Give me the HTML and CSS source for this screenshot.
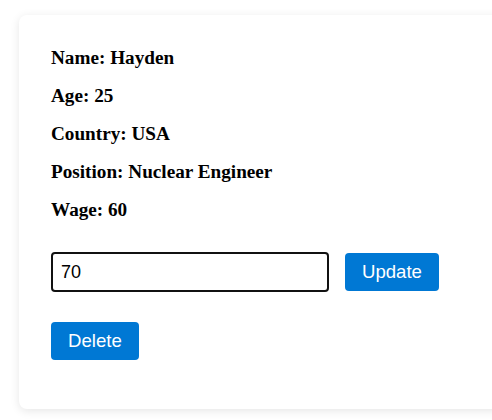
FILE: index.html
```html
<!DOCTYPE html>
<html>
<head>
<meta charset="utf-8">
<link rel="stylesheet" href="styles.css">
</head>
<body>
<div class="card">
  <p class="field">Name: Hayden</p>
  <p class="field">Age: 25</p>
  <p class="field">Country: USA</p>
  <p class="field">Position: Nuclear Engineer</p>
  <p class="field">Wage: 60</p>
  <div class="row">
    <input class="wage-input" type="text" value="70">
    <button class="btn">Update</button>
  </div>
  <button class="btn">Delete</button>
</div>
</body>
</html>
```
FILE: styles.css
```css
html, body {
  margin: 0;
  background: #ffffff;
}
body {
  padding: 15px 0 0 19px;
  overflow: hidden;
  height: 420px;
  box-sizing: border-box;
}
.card {
  width: 520px;
  background: #ffffff;
  border-radius: 8px;
  box-shadow: 0 2px 10px rgba(0, 0, 0, 0.1);
  padding: 16px 32px 49px;
  box-sizing: border-box;
}
.field {
  font-family: "Liberation Serif", "Times New Roman", serif;
  font-weight: bold;
  font-size: 19.2px;
  color: #000;
  margin: 16px 0;
}
.row {
  display: flex;
  align-items: center;
  gap: 16px;
  margin: 31px 0 30px;
}
.wage-input {
  width: 278px;
  height: 40px;
  box-sizing: border-box;
  border: 2px solid #111;
  border-radius: 4px;
  padding: 0 8px;
  font-family: "Liberation Sans", Arial, sans-serif;
  font-size: 18px;
  color: #000;
  outline: none;
}
.btn {
  background: #0078d4;
  color: #fff;
  border: none;
  border-radius: 4px;
  padding: 8px 17px;
  font-family: "Liberation Sans", Arial, sans-serif;
  font-size: 18.6px;
  cursor: pointer;
}
```
